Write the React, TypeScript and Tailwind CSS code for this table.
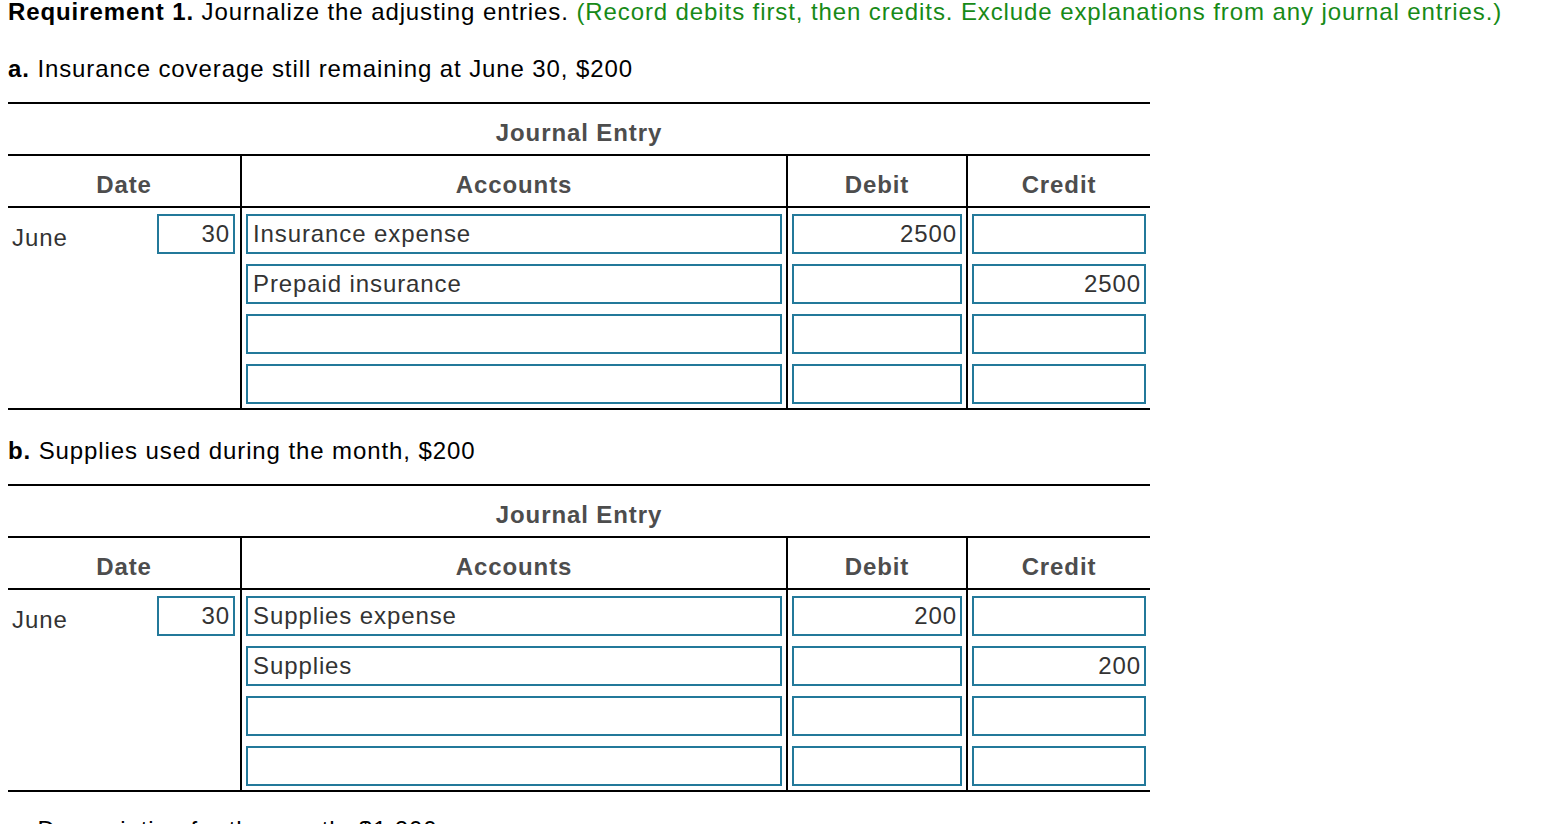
import React from "react";

type Row = { account: string; debit: string; credit: string };

function Box({ text, align, w }: { text: string; align: "left" | "right"; w: string }) {
  return (
    <div
      className={`h-[40px] ${w} border-2 border-[#23799a] flex items-center text-[24px] leading-[24px] text-[#333333] ${
        align === "right" ? "justify-end pr-[3px]" : "justify-start pl-[5px]"
      }`}
    >
      {text}
    </div>
  );
}

function JournalTable({ rows }: { rows: Row[] }) {
  return (
    <div className="w-[1142px] border-t-2 border-b-2 border-black">
      <div className="h-[52px] border-b-2 border-black pt-[17px] text-center font-bold text-[24px] leading-[24px] text-[#4d4d4d]">
        Journal Entry
      </div>
      <div className="flex h-[52px] border-b-2 border-black font-bold text-[24px] leading-[24px] text-[#4d4d4d]">
        <div className="w-[232px] pt-[17px] text-center">Date</div>
        <div className="w-[546px] border-l-2 border-black pt-[17px] text-center">Accounts</div>
        <div className="w-[180px] border-l-2 border-black pt-[17px] text-center">Debit</div>
        <div className="w-[184px] border-l-2 border-black pt-[17px] text-center">Credit</div>
      </div>
      <div className="flex h-[200px]">
        <div className="w-[232px] flex justify-between items-start">
          <div className="pl-[4px] pt-[18px] text-[24px] leading-[24px] text-[#333333]">June</div>
          <div className="pt-[6px] pr-[5px]">
            <Box text="30" align="right" w="w-[78px]" />
          </div>
        </div>
        <div className="w-[546px] border-l-2 border-black pt-[6px] pl-[4px] flex flex-col gap-[10px]">
          {rows.map((r, i) => (
            <Box key={i} text={r.account} align="left" w="w-[536px]" />
          ))}
        </div>
        <div className="w-[180px] border-l-2 border-black pt-[6px] pl-[4px] flex flex-col gap-[10px]">
          {rows.map((r, i) => (
            <Box key={i} text={r.debit} align="right" w="w-[170px]" />
          ))}
        </div>
        <div className="w-[184px] border-l-2 border-black pt-[6px] pl-[4px] flex flex-col gap-[10px]">
          {rows.map((r, i) => (
            <Box key={i} text={r.credit} align="right" w="w-[174px]" />
          ))}
        </div>
      </div>
    </div>
  );
}

export default function App() {
  const rowsA: Row[] = [
    { account: "Insurance expense", debit: "2500", credit: "" },
    { account: "Prepaid insurance", debit: "", credit: "2500" },
    { account: "", debit: "", credit: "" },
    { account: "", debit: "", credit: "" },
  ];
  const rowsB: Row[] = [
    { account: "Supplies expense", debit: "200", credit: "" },
    { account: "Supplies", debit: "", credit: "200" },
    { account: "", debit: "", credit: "" },
    { account: "", debit: "", credit: "" },
  ];
  return (
    <div className="w-[1548px] h-[824px] overflow-hidden bg-white pl-[8px] font-['Liberation_Sans',Arial,sans-serif] tracking-[0.9px] text-black">
      <div className="text-[24px] leading-[24px] whitespace-nowrap">
        <span className="font-bold">Requirement 1.</span> Journalize the adjusting entries.{" "}
        <span className="text-[#178a17]">
          (Record debits first, then credits. Exclude explanations from any journal entries.)
        </span>
      </div>
      <div className="mt-[33px] text-[24px] leading-[24px]">
        <span className="font-bold">a.</span> Insurance coverage still remaining at June 30, $200
      </div>
      <div className="mt-[21px]">
        <JournalTable rows={rowsA} />
      </div>
      <div className="mt-[29px] text-[24px] leading-[24px]">
        <span className="font-bold">b.</span> Supplies used during the month, $200
      </div>
      <div className="mt-[21px]">
        <JournalTable rows={rowsB} />
      </div>
      <div className="mt-[26px] text-[24px] leading-[24px]">
        <span className="font-bold">c.</span> Depreciation for the month, $1,200
      </div>
    </div>
  );
}
